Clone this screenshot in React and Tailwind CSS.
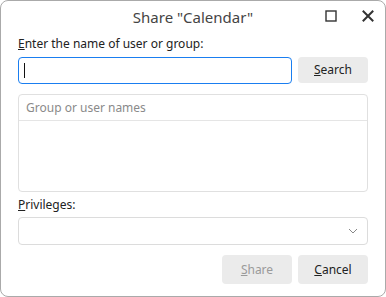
export default function App() {
  return (
    <div className="w-[386px] h-[297px] bg-white" style={{ fontFamily: '"Noto Sans", "Open Sans", sans-serif' }}>
      <div className="w-full h-full border border-[#aaaaaa] rounded-[8px] flex flex-col bg-white overflow-hidden">
        {/* Title bar */}
        <div className="h-[31px] flex items-center relative">
          <div className="flex-1 text-center text-[15px] text-[#444] leading-none pt-[1px]">Share "Calendar"</div>
          <div className="absolute right-[11px] top-[9px] flex items-center gap-[25px]">
            <svg width="12" height="12" viewBox="0 0 12 12">
              <rect x="1" y="1" width="10" height="10" fill="none" stroke="#333" strokeWidth="1.4" />
            </svg>
            <svg width="12" height="12" viewBox="0 0 12 12">
              <path d="M1.5 1.5 L10.5 10.5 M10.5 1.5 L1.5 10.5" stroke="#333" strokeWidth="2" strokeLinecap="square" />
            </svg>
          </div>
        </div>
        <div className="flex flex-col px-[17px]">
          <div className="text-[12px] text-[#222] leading-[16px] mt-[4px]"><span className="underline">E</span>nter the name of user or group:</div>
          <div className="flex gap-[6px] mt-[5px]">
            <div className="w-[274px] h-[27px] border border-[#1a7ef0] rounded-[4px] flex items-center pl-[5px]">
              <div className="w-[1px] h-[15px] bg-[#111]"></div>
            </div>
            <div className="w-[70px] h-[26px] bg-[#ebebeb] rounded-[4px] flex items-center justify-center text-[12px] text-[#222]">
              <span><span className="underline">S</span>earch</span>
            </div>
          </div>
          <div className="mt-[10px] h-[98px] border border-[#e0e0e0] rounded-[4px] flex flex-col">
            <div className="h-[26px] border-b border-[#e5e5e5] flex items-center pl-[7px] text-[12px] text-[#8a8a8a]">Group or user names</div>
          </div>
          <div className="text-[12px] text-[#222] leading-[16px] mt-[5px]"><span className="underline">P</span>rivileges:</div>
          <div className="mt-[4px] h-[28px] border border-[#dcdcdc] rounded-[4px] flex items-center justify-end pr-[9px]">
            <svg width="10" height="6" viewBox="0 0 10 6">
              <path d="M1 1 L5 5 L9 1" fill="none" stroke="#888" strokeWidth="1" />
            </svg>
          </div>
          <div className="flex justify-end gap-[6px] mt-[10px]">
            <div className="w-[70px] h-[29px] bg-[#ebebeb] rounded-[4px] flex items-center justify-center text-[12px] text-[#9a9a9a]">
              <span><span className="underline">S</span>hare</span>
            </div>
            <div className="w-[70px] h-[29px] bg-[#ebebeb] rounded-[4px] flex items-center justify-center text-[12px] text-[#222]">
              <span><span className="underline">C</span>ancel</span>
            </div>
          </div>
        </div>
      </div>
    </div>
  );
}
